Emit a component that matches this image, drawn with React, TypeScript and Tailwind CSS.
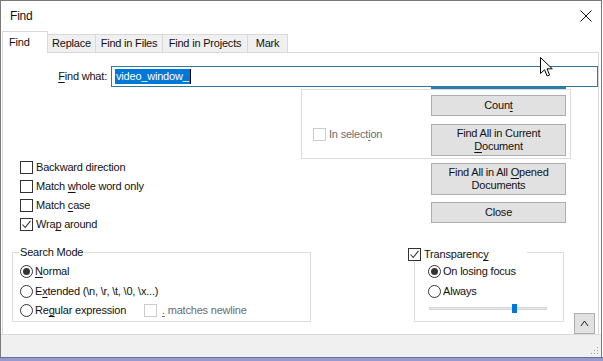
import React from "react";

function U({ children }: { children: React.ReactNode }) {
  return <span className="underline decoration-1 underline-offset-[2px]">{children}</span>;
}

function Check({ checked = false, disabled = false }: { checked?: boolean; disabled?: boolean }) {
  return (
    <span
      className={
        disabled
          ? "w-[13px] h-[13px] border border-[#cccccc] bg-white shrink-0 flex items-center justify-center"
          : "w-[13px] h-[13px] border border-[#333333] bg-white shrink-0 flex items-center justify-center"
      }
    >
      {checked && (
        <svg width="11" height="11" viewBox="0 0 11 11">
          <path d="M1.5 5.5 L4.2 8.5 L9.5 1.8" stroke="#333333" strokeWidth="1.1" fill="none" />
        </svg>
      )}
    </span>
  );
}

function Radio({ on = false }: { on?: boolean }) {
  return (
    <span className="w-[13px] h-[13px] rounded-full border border-[#333333] bg-white shrink-0 flex items-center justify-center">
      {on && <span className="w-[7px] h-[7px] rounded-full bg-[#333333]" />}
    </span>
  );
}

function Btn({ children, tall = false }: { children: React.ReactNode; tall?: boolean }) {
  return (
    <div
      className={
        tall
          ? "w-[135px] h-[32px] border border-[#adadad] bg-[#e1e1e1] flex items-center justify-center text-center leading-[13px]"
          : "w-[135px] h-[21px] border border-[#adadad] bg-[#e1e1e1] flex items-center justify-center text-center leading-[13px]"
      }
    >
      <span>{children}</span>
    </div>
  );
}

export default function App() {
  return (
    <div className="w-[603px] h-[361px] flex flex-col bg-white text-[11px] tracking-[-0.2px] text-[#111111] font-['Segoe_UI','Liberation_Sans',Arial,sans-serif] overflow-hidden relative">
      <div className="w-[602px] h-[357px] border-l border-r border-t border-[#7a7a7a] flex flex-col">
        {/* title bar */}
        <div className="h-[30px] flex items-center justify-between pl-[9px] pr-[9px]">
          <span className="text-[12px]">Find</span>
          <svg width="12" height="12" viewBox="0 0 12 12">
            <path d="M0.5 0.5 L11.5 11.5 M11.5 0.5 L0.5 11.5" stroke="#111111" strokeWidth="1" />
          </svg>
        </div>

        {/* tabs */}
        <div className="h-[21px] flex items-end ml-[1px]">
          <div className="relative z-10 w-[46px] h-[22px] -mb-[1px] bg-white border-l border-t border-r border-[#d9d9d9] flex items-center pl-[6px]">
            Find
          </div>
          <div className="w-[48px] h-[18px] bg-[#f0f0f0] border-t border-r border-[#d9d9d9] flex items-center justify-center">
            Replace
          </div>
          <div className="w-[67px] h-[18px] bg-[#f0f0f0] border-t border-r border-[#d9d9d9] flex items-center justify-center">
            Find in Files
          </div>
          <div className="w-[85px] h-[18px] bg-[#f0f0f0] border-t border-r border-[#d9d9d9] flex items-center justify-center">
            Find in Projects
          </div>
          <div className="w-[40px] h-[18px] bg-[#f0f0f0] border-t border-r border-[#d9d9d9] flex items-center justify-center">
            Mark
          </div>
        </div>

        {/* panel */}
        <div className="ml-[1px] w-[597px] h-[282px] border-t border-l border-r border-[#d9d9d9] bg-white flex flex-col">
          {/* find what row */}
          <div className="mt-[13px] flex items-center h-[21px]">
            <div className="w-[109px] text-right">
              <U>F</U>ind what:
            </div>
            <div className="ml-[4px] w-[487px] h-[21px] shrink-0 border border-[#2a7aa4] bg-white flex items-center pl-[3px]">
              <span className="bg-[#0078d7] text-white leading-[15px] px-[1px]">video_window_</span>
              <span className="w-[1px] h-[15px] bg-black" />
            </div>
          </div>
          <div className="ml-[428px] w-[135px] h-[2px] bg-[#2b7bab]" />

          {/* options area */}
          <div className="flex">
            <div className="w-[298px] pt-[69px] flex flex-col">
              <div className="h-[19px] flex items-center pl-[17px] gap-[3px]">
                <Check />
                <span>Backward direction</span>
              </div>
              <div className="h-[19px] flex items-center pl-[17px] gap-[3px]">
                <Check />
                <span>
                  Match <U>w</U>hole word only
                </span>
              </div>
              <div className="h-[19px] flex items-center pl-[17px] gap-[3px]">
                <Check />
                <span>
                  Match <U>c</U>ase
                </span>
              </div>
              <div className="h-[19px] flex items-center pl-[17px] gap-[3px]">
                <Check checked />
                <span>
                  Wra<U>p</U> around
                </span>
              </div>
            </div>

            <div className="flex flex-col">
              <div className="w-[270px] h-[70px] border border-[#dcdcdc] flex">
                <div className="w-[129px] pt-[38px] pl-[11px] flex items-start gap-[3px] text-[#6d6d6d]">
                  <Check disabled />
                  <span className="leading-[13px]">
                    In select<U>i</U>on
                  </span>
                </div>
                <div className="pt-[5px] flex flex-col gap-[8px]">
                  <Btn>
                    Coun<U>t</U>
                  </Btn>
                  <Btn tall>
                    Find All in Current
                    <br />
                    <U>D</U>ocument
                  </Btn>
                </div>
              </div>
              <div className="ml-[130px] mt-[4px] flex flex-col gap-[7px]">
                <Btn tall>
                  Find All in All <U>O</U>pened
                  <br />
                  Documents
                </Btn>
                <Btn>Close</Btn>
              </div>
            </div>
          </div>

          {/* bottom groups */}
          <div className="mt-[18px] flex items-start">
            <div className="relative ml-[9px] w-[299px] h-[70px] border border-[#dcdcdc] flex flex-col pt-[9px] pl-[7px]">
              <span className="absolute left-[6px] -top-[8px] bg-white px-[1px] leading-[15px]">Search Mode</span>
              <div className="h-[19px] flex items-center gap-[2px]">
                <Radio on />
                <span>
                  <U>N</U>ormal
                </span>
              </div>
              <div className="h-[20px] flex items-center gap-[2px]">
                <Radio />
                <span>
                  E<U>x</U>tended (\n, \r, \t, \0, \x...)
                </span>
              </div>
              <div className="h-[19px] flex items-center gap-[2px]">
                <Radio />
                <span className="w-[107px]">
                  Re<U>g</U>ular expression
                </span>
                <Check disabled />
                <span className="ml-[3px] text-[#6d6d6d]">
                  <U>.</U> matches newline
                </span>
              </div>
            </div>

            <div className="relative ml-[103px] w-[150px] h-[70px] border border-[#dcdcdc] flex flex-col pt-[9px] pl-[13px]">
              <div className="absolute -left-[7px] -top-[6px] w-[119px] h-[15px] bg-white flex items-center gap-[3px]">
                <Check checked />
                <span>
                  Transparenc<U>y</U>
                </span>
              </div>
              <div className="h-[19px] flex items-center gap-[2px]">
                <Radio on />
                <span>On losing focus</span>
              </div>
              <div className="h-[20px] flex items-center gap-[2px]">
                <Radio />
                <span>Always</span>
              </div>
              <div className="relative mt-[6px] ml-[1px] w-[118px] h-[3px] bg-[#e7e7e7] border border-[#d6d6d6]">
                <span className="absolute left-[82px] -top-[4px] w-[5px] h-[9px] bg-[#0078d7]" />
              </div>
            </div>

            <div className="ml-[10px] mt-[61px] w-[21px] h-[21px] border border-[#adadad] bg-[#e1e1e1] flex items-center justify-center">
              <svg width="9" height="7" viewBox="0 0 9 7">
                <path d="M1 6 L4.5 1 L8 6" stroke="#222222" strokeWidth="1" fill="none" />
              </svg>
            </div>
          </div>
        </div>

        {/* status band */}
        <div className="h-[23px] bg-[#f0f0f0] border-t border-[#dadada] flex justify-end items-end pr-[2px] pb-[2px]">
          <svg width="8" height="8" viewBox="0 0 8 8">
            <rect x="6" y="0" width="1" height="1" fill="#a0a0a0" />
            <rect x="3" y="3" width="1" height="1" fill="#a0a0a0" />
            <rect x="6" y="3" width="1" height="1" fill="#a0a0a0" />
            <rect x="0" y="6" width="1" height="1" fill="#a0a0a0" />
            <rect x="3" y="6" width="1" height="1" fill="#a0a0a0" />
            <rect x="6" y="6" width="1" height="1" fill="#a0a0a0" />
          </svg>
        </div>
      </div>
      <div className="h-[4px] bg-[#9999cf] border-t border-[#6a6aa0]" />

      {/* mouse pointer */}
      <svg className="absolute left-[540px] top-[57px]" width="14" height="21" viewBox="0 0 14 21">
        <path
          d="M0.5 0.5 L0.5 16.5 L4.5 12.8 L7.2 19 L9.6 18 L7 11.8 L12.3 11.8 Z"
          fill="#ffffff"
          stroke="#000000"
          strokeWidth="1"
        />
      </svg>
    </div>
  );
}
